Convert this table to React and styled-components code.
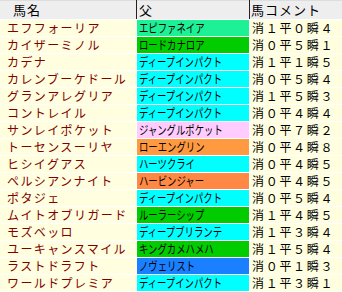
import React from "react";
import styled, { createGlobalStyle } from "styled-components";

const GlobalStyle = createGlobalStyle`
  html, body {
    margin: 0;
    padding: 0;
    background: #ffffff;
  }
`;

const colors = {
  cream: "#ffffe0",
  name: "#800000",
  mint: "#1ef096",
  green: "#00cc00",
  cyan: "#00ffff",
  pink: "#ffccff",
  orange: "#ff9a40",
  darkOrange: "#ff8844",
  blue: "#1a80ff",
};

const rows = [
  ["エフフォーリア", "エピファネイア", colors.mint, "消１平０瞬４"],
  ["カイザーミノル", "ロードカナロア", colors.green, "消０平５瞬１"],
  ["カデナ", "ディープインパクト", colors.cyan, "消１平１瞬５"],
  ["カレンブーケドール", "ディープインパクト", colors.cyan, "消０平５瞬４"],
  ["グランアレグリア", "ディープインパクト", colors.cyan, "消１平５瞬３"],
  ["コントレイル", "ディープインパクト", colors.cyan, "消０平４瞬４"],
  ["サンレイポケット", "ジャングルポケット", colors.pink, "消０平７瞬２"],
  ["トーセンスーリヤ", "ローエングリン", colors.orange, "消０平４瞬８"],
  ["ヒシイグアス", "ハーツクライ", colors.cyan, "消０平４瞬５"],
  ["ペルシアンナイト", "ハービンジャー", colors.darkOrange, "消０平４瞬５"],
  ["ポタジェ", "ディープインパクト", colors.cyan, "消０平５瞬４"],
  ["ムイトオブリガード", "ルーラーシップ", colors.green, "消１平４瞬５"],
  ["モズベッロ", "ディープブリランテ", colors.cyan, "消１平３瞬４"],
  ["ユーキャンスマイル", "キングカメハメハ", colors.green, "消１平５瞬４"],
  ["ラストドラフト", "ノヴェリスト", colors.blue, "消０平１瞬３"],
  ["ワールドプレミア", "ディープインパクト", colors.cyan, "消１平３瞬１"],
];

const Table = styled.div`
  display: grid;
  grid-template-columns: 136px 112px 1fr;
  grid-template-rows: 19px;
  grid-auto-rows: 16px;
  gap: 1px;
  width: 342px;
  height: 292px;
  background: #ffffff;
  font-family: "Noto Sans CJK JP", "DejaVu Sans", sans-serif;
  font-size: 12px;
  line-height: 16px;
`;

const HeadCell = styled.div`
  display: flex;
  align-items: center;
  background: #eeeeee;
  color: #000000;
  font-size: 13px;
  line-height: 18px;
  letter-spacing: 1px;
  padding-left: ${(p) => p.$pad}px;
  border-left: ${(p) => (p.$divider ? "1px solid #222" : "none")};
  margin-left: ${(p) => (p.$divider ? "-1px" : "0")};
  box-shadow: inset 0 1px 0 #dddddd;
`;

const NameCell = styled.div`
  display: flex;
  align-items: center;
  background: ${colors.cream};
  color: ${colors.name};
  padding-left: 7px;
  letter-spacing: 1.4px;
  white-space: nowrap;
`;

const SireCell = styled.div`
  display: flex;
  align-items: center;
  background: ${(p) => p.$bg};
  color: #000000;
  padding-left: 2px;
  white-space: nowrap;
`;

const Narrow = styled.span`
  display: inline-block;
  transform: scaleX(0.78);
  transform-origin: left center;
`;

const CommentCell = styled.div`
  display: flex;
  align-items: center;
  background: ${colors.cream};
  color: #000000;
  padding-left: 2px;
  letter-spacing: 1.7px;
  white-space: nowrap;
`;

export default function App() {
  return (
    <>
      <GlobalStyle />
      <Table>
        <HeadCell $pad={13}>馬名</HeadCell>
        <HeadCell $pad={2} $divider>
          父
        </HeadCell>
        <HeadCell $pad={1} $divider>
          馬コメント
        </HeadCell>
        {rows.map(([name, sire, bg, comment]) => (
          <React.Fragment key={name}>
            <NameCell>{name}</NameCell>
            <SireCell $bg={bg}>
              <Narrow>{sire}</Narrow>
            </SireCell>
            <CommentCell>{comment}</CommentCell>
          </React.Fragment>
        ))}
      </Table>
    </>
  );
}
